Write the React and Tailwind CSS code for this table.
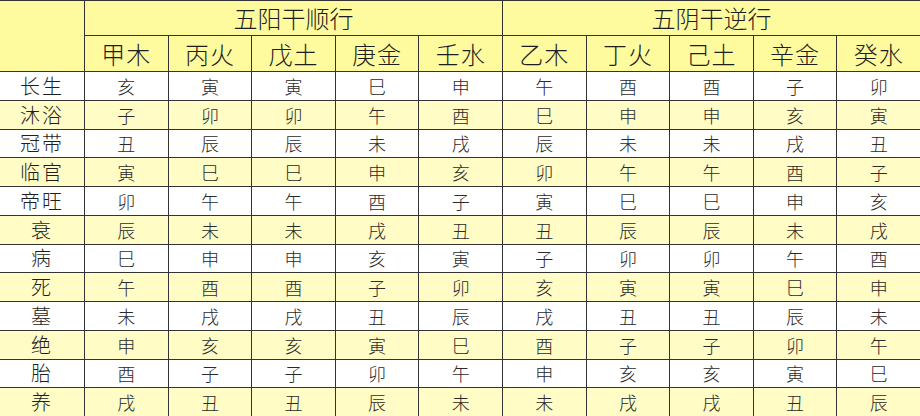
import React from "react";

const yang = ["甲木", "丙火", "戊土", "庚金", "壬水"];
const yin = ["乙木", "丁火", "己土", "辛金", "癸水"];

const rows = [
  ["长生", "亥", "寅", "寅", "巳", "申", "午", "酉", "酉", "子", "卯"],
  ["沐浴", "子", "卯", "卯", "午", "酉", "巳", "申", "申", "亥", "寅"],
  ["冠带", "丑", "辰", "辰", "未", "戌", "辰", "未", "未", "戌", "丑"],
  ["临官", "寅", "巳", "巳", "申", "亥", "卯", "午", "午", "酉", "子"],
  ["帝旺", "卯", "午", "午", "酉", "子", "寅", "巳", "巳", "申", "亥"],
  ["衰", "辰", "未", "未", "戌", "丑", "丑", "辰", "辰", "未", "戌"],
  ["病", "巳", "申", "申", "亥", "寅", "子", "卯", "卯", "午", "酉"],
  ["死", "午", "酉", "酉", "子", "卯", "亥", "寅", "寅", "巳", "申"],
  ["墓", "未", "戌", "戌", "丑", "辰", "戌", "丑", "丑", "辰", "未"],
  ["绝", "申", "亥", "亥", "寅", "巳", "酉", "子", "子", "卯", "午"],
  ["胎", "酉", "子", "子", "卯", "午", "申", "亥", "亥", "寅", "巳"],
  ["养", "戌", "丑", "丑", "辰", "未", "未", "戌", "戌", "丑", "辰"],
];

function App() {
  return (
    <div
      className="w-[920px] h-[416px] overflow-hidden bg-white font-light"
      style={{ fontFamily: '"Noto Sans CJK SC", "Noto Sans", sans-serif' }}
    >
      <div className="grid grid-cols-[84px_repeat(10,1fr)] grid-rows-[34px_35px_repeat(12,27.75px)] gap-px bg-[#333] pt-px text-[#1e1e1e]">
        <div className="row-span-2 bg-[#fdfb9e]" />
        <div className="col-span-5 bg-[#fdfb9e] flex items-center justify-center text-[24px] leading-none">
          五阳干顺行
        </div>
        <div className="col-span-5 bg-[#fdfb9e] flex items-center justify-center text-[24px] leading-none">
          五阴干逆行
        </div>
        {[...yang, ...yin].map((s) => (
          <div key={s} className="bg-[#fdfb9e] flex items-center justify-center text-[24px] leading-none tracking-[1px]">
            {s}
          </div>
        ))}
        {rows.map((r, i) =>
          r.map((c, j) => (
            <div
              key={i + "-" + j}
              className={
                "flex items-center justify-center leading-none " +
                (i % 2 === 1 ? "bg-[#fffcc6] " : "bg-white ") +
                (j === 0 ? "text-[20px] tracking-[2px]" : "text-[18px] text-[#2a2a2a]")
              }
            >
              {c}
            </div>
          ))
        )}
      </div>
    </div>
  );
}

export default App;
